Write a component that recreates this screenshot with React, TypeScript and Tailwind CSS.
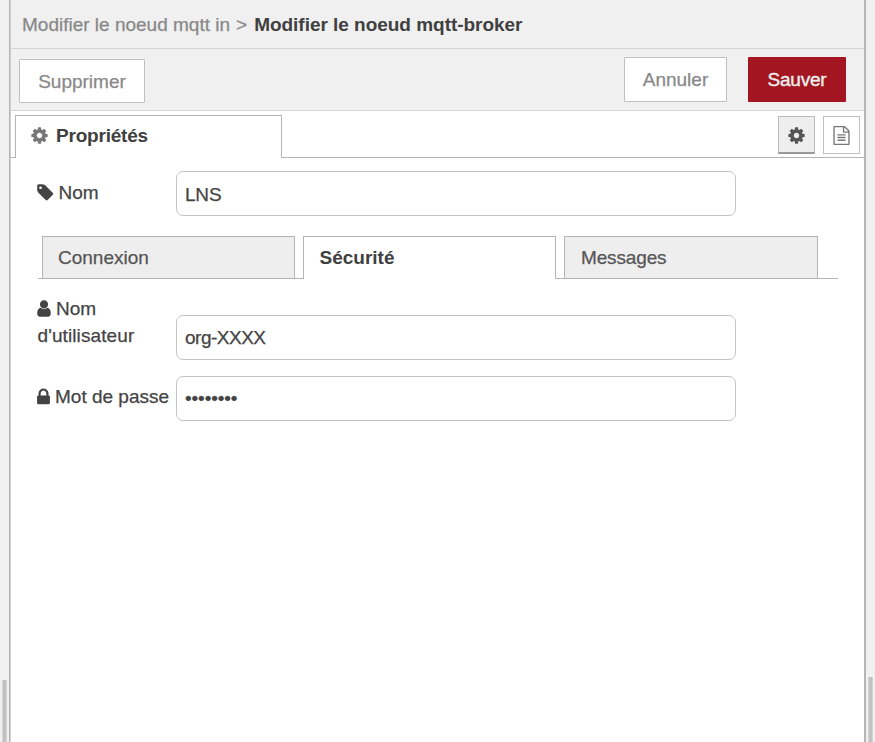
import React from "react";

const ICONS = {
  cog: "M1152 896q0-106-75-181t-181-75-181 75-75 181 75 181 181 75 181-75 75-181zm512-109v222q0 12-8 23t-20 13l-185 28q-19 54-39 91 35 50 107 138 10 12 10 25t-9 23q-27 37-99 108t-94 71q-12 0-26-9l-138-108q-44 23-91 38-16 136-29 186-7 28-36 28h-222q-14 0-24.5-8.5t-11.5-21.5l-28-184q-49-16-90-37l-141 107q-10 9-25 9-14 0-25-11-126-114-165-168-7-10-7-23 0-12 8-23 15-21 51-66.5t54-70.5q-27-50-41-99l-183-27q-13-2-21-12.5t-8-23.5v-222q0-12 8-23t19-13l186-28q14-46 39-92-40-57-107-138-10-12-10-24 0-10 9-23 26-36 98.5-107.5t94.5-71.5q13 0 26 10l138 107q44-23 91-38 16-136 29-186 7-28 36-28h222q14 0 24.5 8.5t11.5 21.5l28 184q49 16 90 37l142-107q9-9 24-9 13 0 25 10 129 119 165 170 7 8 7 22 0 12-8 23-15 21-51 66.5t-54 70.5q26 50 41 98l183 28q13 2 21 12.5t8 23.5z",
  tag: "M576 448q0-53-37.5-90.5t-90.5-37.5-90.5 37.5-37.5 90.5 37.5 90.5 90.5 37.5 90.5-37.5 37.5-90.5zm1067 576q0 53-37 90l-491 492q-39 37-91 37-53 0-90-37l-715-716q-38-37-64.5-101t-26.5-117v-416q0-52 38-90t90-38h416q53 0 117 26.5t102 64.5l715 714q37 39 37 91z",
  lock: "M640 768h512v-192q0-106-75-181t-181-75-181 75-75 181v192zm832 96v576q0 40-28 68t-68 28h-960q-40 0-68-28t-28-68v-576q0-40 28-68t68-28h32v-192q0-184 132-316t316-132 316 132 132 316v192h32q40 0 68 28t28 68z",
  user: "M1536 1399q0 109-62.5 187t-150.5 78h-854q-88 0-150.5-78t-62.5-187q0-85 8.5-160.5t31.5-152 58.5-131 94-89 134.5-34.5q131 128 313 128t313-128q76 0 134.5 34.5t94 89 58.5 131 31.5 152 8.5 160.5zm-256-887q0 159-112.5 271.5t-271.5 112.5-271.5-112.5-112.5-271.5 112.5-271.5 271.5-112.5 271.5 112.5 112.5 271.5z",
  file: "M1596 380q28 28 48 76t20 88v1152q0 40-28 68t-68 28h-1344q-40 0-68-28t-28-68v-1600q0-40 28-68t68-28h896q40 0 88 20t76 48zm-444-244v376h376q-10-29-22-41l-313-313q-12-12-41-22zm384 1528v-1024h-416q-40 0-68-28t-28-68v-416h-768v1536h1280zm-1024-864q0-14 9-23t23-9h704q14 0 23 9t9 23v64q0 14-9 23t-23 9h-704q-14 0-23-9t-9-23v-64zm736 224q14 0 23 9t9 23v64q0 14-9 23t-23 9h-704q-14 0-23-9t-9-23v-64q0-14 9-23t23-9h704zm0 256q14 0 23 9t9 23v64q0 14-9 23t-23 9h-704q-14 0-23-9t-9-23v-64q0-14 9-23t23-9h704z",
};

function Icon({ name, box = "0 0 1792 1792", className }: { name: keyof typeof ICONS; box?: string; className: string }) {
  return (
    <svg viewBox={box} fill="currentColor" className={"shrink-0 " + className} aria-hidden="true">
      <path d={ICONS[name]} />
    </svg>
  );
}

const INPUT =
  "h-[45px] w-[560px] shrink-0 rounded-[7px] border border-[#c4c4c4] bg-white px-2 text-[#444] outline-none";

export default function App() {
  return (
    <div className="flex h-[742px] w-[875px] overflow-hidden bg-[#f0f0f0] font-['Liberation_Sans',Arial,sans-serif] text-[19px] leading-[27px] text-[#444] [-webkit-text-stroke:0.25px]">
      <div className="flex w-[9px] shrink-0 items-end pl-[2px]">
        <div className="h-[62px] w-[5px] border-x border-[#d4d4d4] bg-[#c2c2c2]" />
      </div>
      <div className="w-px shrink-0 bg-[#b5b5b5]" />
      <div className="w-px shrink-0 bg-[#d0d0d0]" />

      <main className="flex w-[853px] shrink-0 flex-col bg-white">
        <header className="flex h-[49px] shrink-0 items-center border-b border-[#d6d6d6] bg-[#f0f0f0] pl-[11px] whitespace-pre">
          <span className="text-[#888]">Modifier le noeud mqtt in</span>
          <span className="mr-[7px] ml-[6px] text-[#888]">&gt;</span>
          <span className="font-bold tracking-[-0.03px] text-[#404040] [-webkit-text-stroke:0px]">Modifier le noeud mqtt-broker</span>
        </header>

        <div className="flex h-[62px] shrink-0 items-start border-b border-[#d6d6d6] bg-[#f0f0f0] pr-[18px] pl-2">
          <button className="mt-[10px] h-[44px] w-[126px] rounded-[1px] border border-[#c0c0c0] bg-white text-[#888]">Supprimer</button>
          <button className="mt-[8px] ml-auto h-[45px] w-[103px] rounded-[1px] border border-[#c0c0c0] bg-white text-[#888]">Annuler</button>
          <button className="mt-[8px] ml-[21px] h-[45px] w-[98px] rounded-[1px] bg-[#a31621] tracking-[-0.2px] text-[#eee] [-webkit-text-stroke:0.4px]">Sauver</button>
        </div>

        <div className="flex h-[47px] shrink-0 items-end">
          <div className="w-1 border-b border-[#b5b5b5]" />
          <div className="flex h-[43px] w-[267px] items-center border-x border-t border-[#b5b5b5] pb-[3px] pl-[14px]">
            <Icon name="cog" className="h-[19px] w-[19px] text-[#777]" />
            <span className="ml-[7px] font-bold tracking-[-0.2px] text-[#404040] [-webkit-text-stroke:0px]">Propriétés</span>
          </div>
          <div className="flex h-full flex-1 items-start justify-end gap-2 border-b border-[#b5b5b5] pt-[5px] pr-1">
            <button className="flex h-[38px] w-[37px] items-center justify-center border border-b-2 border-[#bbb] border-b-[#999] bg-[#eee] pt-px text-[#555]">
              <Icon name="cog" className="h-[19px] w-[19px]" />
            </button>
            <button className="flex h-[38px] w-[37px] items-center justify-center border border-[#c0c0c0] bg-white text-[#777]">
              <Icon name="file" className="h-[19px] w-[19px]" />
            </button>
          </div>
        </div>

        <div className="flex flex-col pt-[13px] pl-[26px]">
          <div className="flex items-center">
            <div className="flex w-[139px] items-center pb-[3px]">
              <Icon name="tag" box="128 0 1664 1792" className="h-[19px] w-[18px]" />
              <span className="ml-[3.5px]">Nom</span>
            </div>
            <input className={INPUT + " pt-[2px] tracking-[-0.2px]"} defaultValue="LNS" />
          </div>

          <div className="mt-5 ml-[1px] flex h-[43px] w-[800px] text-[#555]">
            <div className="w-1 border-b border-[#b5b5b5]" />
            <div className="w-[253px] border border-[#b5b5b5] bg-[#eee] pt-[7px] pl-[15px]">Connexion</div>
            <div className="w-2 border-b border-[#b5b5b5]" />
            <div className="w-[253px] border-x border-t border-[#b5b5b5] pt-[7px] pl-[15.5px] font-bold text-[#404040] [-webkit-text-stroke:0px]">Sécurité</div>
            <div className="w-2 border-b border-[#b5b5b5]" />
            <div className="w-[254px] border border-[#b5b5b5] bg-[#eee] pt-[7px] pl-[16px] tracking-[-0.15px]">Messages</div>
            <div className="flex-1 border-b border-[#b5b5b5]" />
          </div>

          <div className="mt-[16px] flex h-[65px] items-end">
            <div className="w-[139px] self-start">
              <div className="flex items-center">
                <Icon name="user" box="256 0 1280 1792" className="h-[19px] w-[14px]" />
                <span className="ml-[5px]">Nom</span>
              </div>
              <div className="pl-[0.5px] tracking-[0.1px]">d'utilisateur</div>
            </div>
            <input className={INPUT + " tracking-[-0.5px]"} defaultValue="org-XXXX" />
          </div>

          <div className="mt-4 flex items-center">
            <div className="flex w-[139px] items-center pb-[4px] whitespace-nowrap">
              <Icon name="lock" box="320 0 1152 1792" className="h-[20px] w-[13px]" />
              <span className="ml-[5px]">Mot de passe</span>
            </div>
            <input className={INPUT + " tracking-[-0.1px]"} type="password" defaultValue="password" />
          </div>
        </div>
      </main>

      <div className="w-[2px] shrink-0 bg-[#b5b5b5]" />
      <div className="flex flex-1 items-end pl-[2px]">
        <div className="h-[65px] w-[5px] border-x border-[#d4d4d4] bg-[#c2c2c2]" />
      </div>
    </div>
  );
}
